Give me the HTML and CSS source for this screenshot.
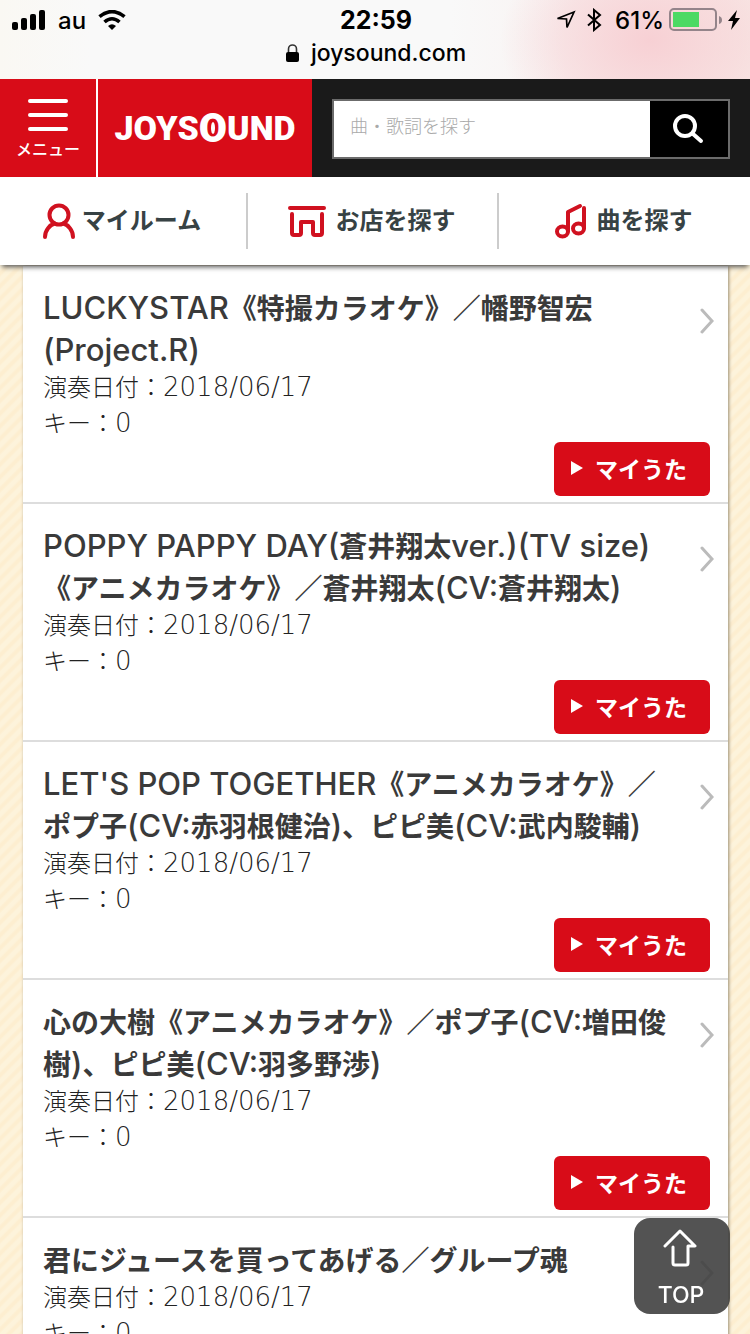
FILE: index.html
```html
<!DOCTYPE html>
<html lang="ja">
<head>
<meta charset="utf-8">
<meta name="viewport" content="width=device-width">
<title>JOYSOUND</title>
<link rel="stylesheet" href="styles.css">
</head>
<body>
<div class="browser-bar">
  <div class="status">
    <div class="status-left">
      <svg width="34" height="20" viewBox="0 0 34 20"><rect y="12" width="6" height="8" rx="2"/><rect x="9" y="8" width="6" height="12" rx="2"/><rect x="18" y="4" width="6" height="16" rx="2"/><rect x="27" width="6" height="20" rx="2"/></svg>
      <span class="carrier">au</span>
      <svg width="28" height="20" viewBox="0 0 28 20"><path d="M14 20l-4-4q4-3.400 8 0z"/><path d="M6.500 12Q14 5.500 21.500 12M1.500 6.700Q14-3.500 26.500 6.700" fill="none" stroke="#000" stroke-width="3.600"/></svg>
    </div>
    <div class="clock">22:59</div>
    <div class="status-right">
      <svg width="20" height="20" viewBox="0 0 20 20" fill="none" stroke="#000" stroke-width="1.700"><path d="M1.500 8.500L18 2l-7 15.500-.5-8.500z"/></svg>
      <svg class="bluetooth" width="16" height="24" viewBox="0 0 16 24" fill="none" stroke="#000" stroke-width="2"><path d="M2 6.500l12 10.500-6 5V2l6 5L2 17.500"/></svg>
      <span class="percent">61%</span>
      <svg width="54" height="24" viewBox="0 0 54 24"><rect x="1" y="1" width="46" height="21" rx="4" fill="none" stroke="#94848a" stroke-width="2"/><rect x="4" y="4" width="26" height="15" fill="#4cd964"/><path d="M50 8q3 1 3 4t-3 4z" fill="#94848a"/></svg>
      <svg width="12" height="22" viewBox="0 0 12 22"><path d="M9 1L0 12h5L3 21l9-12H7z"/></svg>
    </div>
  </div>
  <div class="address">
    <svg width="13" height="18" viewBox="0 0 13 18"><rect y="8" width="13" height="10" rx="2"/><path d="M2.500 8V5a4 4 0 0 1 8 0v3" fill="none" stroke="#333" stroke-width="1.600"/></svg>
    <span>joysound.com</span>
  </div>
</div>

<header class="site-header">
  <button class="menu-button" type="button">
    <svg width="40" height="34" viewBox="0 0 40 34" stroke="#fff" stroke-width="4" stroke-linecap="round"><path d="M2 3h36M2 17h36M2 31h36"/></svg>
    <span>メニュー</span>
  </button>
  <a class="logo" href="#" aria-label="JOYSOUND"><span>JOYS</span><span class="logo-ring">O</span><span>UND</span></a>
  <form class="search">
    <input class="search-input" type="search" aria-label="曲・歌詞を探す" placeholder="曲・歌詞を探す">
    <button class="search-button" type="button" aria-label="検索">
      <svg width="32" height="32" viewBox="0 0 32 32" fill="none" stroke="#fff" stroke-width="4" stroke-linecap="round"><circle cx="12" cy="13" r="10"/><path d="M19.500 20.500L28 28"/></svg>
    </button>
  </form>
</header>

<nav class="site-nav">
  <a href="#">
    <svg width="32" height="36" viewBox="0 0 32 36" fill="none" stroke="#d01120" stroke-width="4" stroke-linecap="round"><circle cx="16" cy="12" r="9.500"/><path d="M2 34c0-7 5-12 9.500-13.500M30 34c0-7-5-12-9.500-13.500"/></svg>
    <span>マイルーム</span>
  </a>
  <a href="#">
    <svg width="38" height="32" viewBox="0 0 38 32" fill="none" stroke="#d01120" stroke-width="4" stroke-linecap="round" stroke-linejoin="round"><path d="M2 3h34M4 9v19q0 2 2 2h5q2 0 2-2V17h12v11q0 2 2 2h5q2 0 2-2V9"/></svg>
    <span>お店を探す</span>
  </a>
  <a href="#">
    <svg width="32" height="36" viewBox="0 0 32 36" fill="none" stroke="#d01120" stroke-width="4" stroke-linecap="round" stroke-linejoin="round"><ellipse cx="7.500" cy="28.500" rx="5.500" ry="5"/><ellipse cx="23.500" cy="25.500" rx="5.500" ry="5"/><path d="M13 28V9l12-6M29 25V5"/></svg>
    <span>曲を探す</span>
  </a>
</nav>

<main class="page">
  <ul class="song-list">
    <li class="song">
      <a class="song-link" href="#">
        <span class="song-title"><span class="latin">LUCKYSTAR</span>《特撮カラオケ》／幡野智宏<br><span class="latin">(Project.R)</span></span>
        <span class="song-meta">演奏日付：<span class="digits">2018/06/17</span></span>
        <span class="song-meta">キー：<span class="digits">0</span></span>
      </a>
      <svg class="chevron" width="14" height="26" viewBox="0 0 14 26"><path d="M2 2l10 11L2 24"/></svg>
      <button class="my-song" type="button"><svg width="12" height="14" viewBox="0 0 12 14"><path d="M0 0l12 7-12 7z"/></svg>マイうた</button>
    </li>
    <li class="song">
      <a class="song-link" href="#">
        <span class="song-title"><span class="latin">POPPY PAPPY DAY(</span>蒼井翔太<span class="latin">ver.)(TV size)</span><br>《アニメカラオケ》／蒼井翔太<span class="latin">(CV:</span>蒼井翔太<span class="latin">)</span></span>
        <span class="song-meta">演奏日付：<span class="digits">2018/06/17</span></span>
        <span class="song-meta">キー：<span class="digits">0</span></span>
      </a>
      <svg class="chevron" width="14" height="26" viewBox="0 0 14 26"><path d="M2 2l10 11L2 24"/></svg>
      <button class="my-song" type="button"><svg width="12" height="14" viewBox="0 0 12 14"><path d="M0 0l12 7-12 7z"/></svg>マイうた</button>
    </li>
    <li class="song">
      <a class="song-link" href="#">
        <span class="song-title"><span class="latin">LET'S POP TOGETHER</span>《アニメカラオケ》／<br>ポプ子<span class="latin">(CV:</span>赤羽根健治<span class="latin">)</span>、ピピ美<span class="latin">(CV:</span>武内駿輔<span class="latin">)</span></span>
        <span class="song-meta">演奏日付：<span class="digits">2018/06/17</span></span>
        <span class="song-meta">キー：<span class="digits">0</span></span>
      </a>
      <svg class="chevron" width="14" height="26" viewBox="0 0 14 26"><path d="M2 2l10 11L2 24"/></svg>
      <button class="my-song" type="button"><svg width="12" height="14" viewBox="0 0 12 14"><path d="M0 0l12 7-12 7z"/></svg>マイうた</button>
    </li>
    <li class="song">
      <a class="song-link" href="#">
        <span class="song-title">心の大樹《アニメカラオケ》／ポプ子<span class="latin">(CV:</span>増田俊<br>樹<span class="latin">)</span>、ピピ美<span class="latin">(CV:</span>羽多野渉<span class="latin">)</span></span>
        <span class="song-meta">演奏日付：<span class="digits">2018/06/17</span></span>
        <span class="song-meta">キー：<span class="digits">0</span></span>
      </a>
      <svg class="chevron" width="14" height="26" viewBox="0 0 14 26"><path d="M2 2l10 11L2 24"/></svg>
      <button class="my-song" type="button"><svg width="12" height="14" viewBox="0 0 12 14"><path d="M0 0l12 7-12 7z"/></svg>マイうた</button>
    </li>
    <li class="song">
      <a class="song-link" href="#">
        <span class="song-title">君にジュースを買ってあげる／グループ魂</span>
        <span class="song-meta">演奏日付：<span class="digits">2018/06/17</span></span>
        <span class="song-meta">キー：<span class="digits">0</span></span>
      </a>
      <svg class="chevron" width="14" height="26" viewBox="0 0 14 26"><path d="M2 2l10 11L2 24"/></svg>
    </li>
  </ul>
</main>

<a class="to-top" href="#">
  <svg width="36" height="38" viewBox="0 0 36 38" fill="none" stroke="#fff" stroke-width="3" stroke-linecap="round" stroke-linejoin="round"><path d="M2 17L17 2l15 15h-7v17q0 2-2 2H12q-2 0-2-2V18"/></svg>
  <span>TOP</span>
</a>
</body>
</html>
```
FILE: styles.css
```css
* { box-sizing: border-box; }

body {
  margin: 0;
  height: 100vh;
  display: flex;
  flex-direction: column;
  overflow: hidden;
  background: #fff;
  color: #3a3a3a;
  font-family: "Noto Sans CJK JP", sans-serif;
}

a { color: inherit; text-decoration: none; }
button { border: 0; padding: 0; font-family: inherit; color: #fff; }
svg { display: block; flex: none; }

.browser-bar {
  flex: none;
  height: 79px;
  padding: 4px 10px 0 12px;
  color: #000;
  font-family: Inter, sans-serif;
  font-size: 24px;
  font-weight: 500;
  background:
    radial-gradient(ellipse 150px 110px at 650px 40px, #f7d0d4 0%, #f7d0d480 60%, #f7d0d400 100%),
    linear-gradient(90deg, #faf8f3, #f9f9f9 12%, #f9f9f9 60%, #f8eae7);
}
.status {
  display: grid;
  grid-template-columns: 1fr auto 1fr;
  align-items: center;
  height: 32px;
}
.status-left { display: flex; align-items: center; gap: 12px; }
.status-right { display: flex; align-items: center; justify-content: flex-end; gap: 5px; }
.bluetooth { margin: 0 8px 0 5px; }
.clock { font-size: 25px; font-weight: 700; }
.address {
  display: flex;
  justify-content: center;
  align-items: center;
  gap: 12px;
  height: 34px;
  font-size: 23px;
}

.site-header {
  flex: none;
  display: flex;
  height: 98px;
  background: #1a1a1a;
}
.menu-button {
  width: 98px;
  display: flex;
  flex-direction: column;
  align-items: center;
  gap: 6px;
  padding-top: 19px;
  border-right: 2px solid #fff;
  background: #d80c18;
  font-size: 16px;
  font-weight: 500;
  line-height: 20px;
}
.logo {
  width: 214px;
  display: flex;
  align-items: center;
  justify-content: center;
  background: #d80c18;
  color: #fff;
  font: 900 34px Roboto, sans-serif;
}
.logo-ring {
  position: relative;
  font-size: 41px;
}
.logo-ring::after {
  content: "";
  position: absolute;
  inset: 0;
  margin: auto;
  width: 4px;
  height: 12px;
  border-radius: 50%;
  background: #fff;
}
.search {
  flex: 1;
  display: flex;
  margin: 20px 20px 18px;
  border: 2px solid #6b6b6b;
}
.search-input {
  flex: 1;
  min-width: 0;
  border: 0;
  border-radius: 0;
  padding: 0 16px 8px;
  background: #fff;
  font-family: inherit;
  font-size: 18px;
  font-weight: 300;
}
.search-input::placeholder { color: #a9a9a9; }
.search-button {
  width: 78px;
  display: flex;
  align-items: center;
  justify-content: center;
  background: #000;
}

.site-nav {
  flex: none;
  position: relative;
  z-index: 1;
  height: 88px;
  display: grid;
  grid-template-columns: 246fr 251fr 253fr;
  align-items: center;
  background: #fff;
  box-shadow: 0 4px 5px -2px #555;
  color: #374244;
  font-size: 24px;
  font-weight: 600;
}
.site-nav a {
  height: 56px;
  display: flex;
  align-items: center;
  justify-content: center;
  gap: 10px;
  padding-right: 2px;
}
.site-nav a:first-child { gap: 7px; }
.site-nav a + a { border-left: 2px solid #ccc; }
.site-nav span {
  padding-bottom: 4px;
  line-height: 32px;
}

.page {
  flex: 1;
  min-height: 0;
  overflow: hidden;
  padding: 1px 22px 0 23px;
  background: repeating-linear-gradient(135deg, #fdf3db 0 3px, #fdeed0 5px 7px, #fdf3db 9px);
}
.song-list {
  margin: 0;
  padding: 0;
  list-style: none;
  background: #fff;
  box-shadow: 1px 0 3px #998d75;
}
.song {
  position: relative;
  display: flex;
  flex-direction: column;
  padding: 20px 18px 6px 20px;
  border-bottom: 2px solid #ddd;
}
.song-link {
  display: block;
  padding-bottom: 2px;
}
.song-title {
  display: block;
  margin-bottom: -2px;
  font-size: 28px;
  font-weight: 600;
  line-height: 42px;
  white-space: nowrap;
}
.latin {
  font-family: Inter, sans-serif;
  font-size: 31px;
  font-weight: 500;
  line-height: 1;
}
.song-meta {
  display: block;
  color: #222;
  font-size: 24px;
  font-weight: 300;
  line-height: 36px;
}
.digits {
  font-family: "DejaVu Sans Light", "DejaVu Sans", sans-serif;
  font-size: 26px;
  font-weight: 200;
  line-height: 1;
}
.chevron {
  position: absolute;
  top: 42px;
  right: 14px;
  fill: none;
  stroke: #bbb;
  stroke-width: 3;
  stroke-linecap: round;
}
.my-song {
  align-self: flex-end;
  display: flex;
  align-items: center;
  justify-content: center;
  gap: 12px;
  width: 156px;
  height: 54px;
  padding: 0 6px 2px 0;
  border-radius: 6px;
  background: #d80c18;
  font-size: 23px;
  font-weight: 700;
}
.my-song svg { fill: #fff; }

.to-top {
  position: fixed;
  z-index: 2;
  right: 20px;
  bottom: 20px;
  width: 96px;
  height: 96px;
  display: flex;
  flex-direction: column;
  align-items: center;
  padding: 11px 2px 0 0;
  gap: 14px;
  border-radius: 16px;
  background: rgba(64, 64, 64, 0.9);
  color: #fff;
  font-family: Inter, sans-serif;
  font-size: 23px;
  font-weight: 500;
  line-height: 28px;
}
```
